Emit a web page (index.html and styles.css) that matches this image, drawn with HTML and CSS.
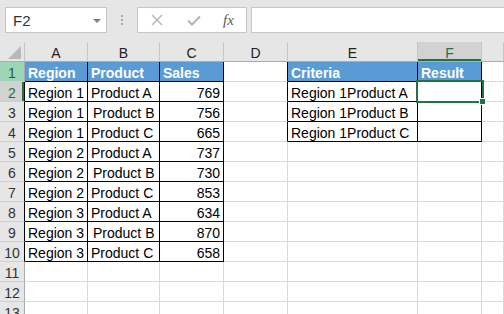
FILE: index.html
```html
<!DOCTYPE html>
<html lang="en">

<head>
    <meta charset="UTF-8">
    <meta name="viewport" content="width=device-width, initial-scale=1.0">
    <title>Sheet1</title>
    <link rel="stylesheet" href="styles.css">
</head>

<body>
    <div class="bar">
        <div class="namebox">
            <span>F2</span>
            <span class="caret"></span>
        </div>
        <div class="grip"><i></i><i></i><i></i></div>
        <div class="fxbox">
            <svg class="cancel" width="12" height="12" viewBox="0 0 12 12">
                <path d="M1 1L11 11M11 1L1 11" stroke="#b4b4b4" stroke-width="1.4" fill="none" />
            </svg>
            <svg class="enter" width="14" height="11" viewBox="0 0 14 11">
                <path d="M1 5.5L5 9.5L13 1.5" stroke="#b4b4b4" stroke-width="2" fill="none" />
            </svg>
            <span class="fx">fx</span>
        </div>
        <div class="formula"></div>
    </div>

    <div class="sheet">
        <div class="row">
            <div class="c corner">
                <svg width="13" height="13" viewBox="0 0 13 13"><path d="M13 0V13H0Z" fill="#b9b9b9" /></svg>
            </div>
            <div class="c ch">A</div>
            <div class="c ch">B</div>
            <div class="c ch">C</div>
            <div class="c ch">D</div>
            <div class="c ch">E</div>
            <div class="c ch sel">F</div>
            <div class="c ch"></div>
        </div>

        <div class="row">
            <div class="c rh act">1</div>
            <div class="c hd">Region</div>
            <div class="c hd">Product</div>
            <div class="c hd">Sales</div>
            <div class="c edge"></div>
            <div class="c hd">Criteria</div>
            <div class="c hd">Result</div>
            <div class="c"></div>
        </div>

        <div class="row">
            <div class="c rh cur">2</div>
            <div class="c t">Region 1</div>
            <div class="c t">Product A</div>
            <div class="c t num">769</div>
            <div class="c edge"></div>
            <div class="c t">Region 1Product A</div>
            <div class="c t active"><span class="pick"><b class="handle"></b></span></div>
            <div class="c"></div>
        </div>

        <div class="row">
            <div class="c rh edge">3</div>
            <div class="c t">Region 1</div>
            <div class="c t pad">Product B</div>
            <div class="c t num">756</div>
            <div class="c edge"></div>
            <div class="c t">Region 1Product B</div>
            <div class="c t"></div>
            <div class="c"></div>
        </div>

        <div class="row">
            <div class="c rh edge">4</div>
            <div class="c t">Region 1</div>
            <div class="c t">Product C</div>
            <div class="c t num">665</div>
            <div class="c edge"></div>
            <div class="c t">Region 1Product C</div>
            <div class="c t"></div>
            <div class="c"></div>
        </div>

        <div class="row">
            <div class="c rh edge">5</div>
            <div class="c t">Region 2</div>
            <div class="c t">Product A</div>
            <div class="c t num">737</div>
            <div class="c"></div>
            <div class="c"></div>
            <div class="c"></div>
            <div class="c"></div>
        </div>

        <div class="row">
            <div class="c rh edge">6</div>
            <div class="c t">Region 2</div>
            <div class="c t pad">Product B</div>
            <div class="c t num">730</div>
            <div class="c"></div>
            <div class="c"></div>
            <div class="c"></div>
            <div class="c"></div>
        </div>

        <div class="row">
            <div class="c rh edge">7</div>
            <div class="c t">Region 2</div>
            <div class="c t">Product C</div>
            <div class="c t num">853</div>
            <div class="c"></div>
            <div class="c"></div>
            <div class="c"></div>
            <div class="c"></div>
        </div>

        <div class="row">
            <div class="c rh edge">8</div>
            <div class="c t">Region 3</div>
            <div class="c t">Product A</div>
            <div class="c t num">634</div>
            <div class="c"></div>
            <div class="c"></div>
            <div class="c"></div>
            <div class="c"></div>
        </div>

        <div class="row">
            <div class="c rh edge">9</div>
            <div class="c t">Region 3</div>
            <div class="c t pad">Product B</div>
            <div class="c t num">870</div>
            <div class="c"></div>
            <div class="c"></div>
            <div class="c"></div>
            <div class="c"></div>
        </div>

        <div class="row">
            <div class="c rh edge">10</div>
            <div class="c t">Region 3</div>
            <div class="c t">Product C</div>
            <div class="c t num">658</div>
            <div class="c"></div>
            <div class="c"></div>
            <div class="c"></div>
            <div class="c"></div>
        </div>

        <div class="row">
            <div class="c rh">11</div>
            <div class="c"></div>
            <div class="c"></div>
            <div class="c"></div>
            <div class="c"></div>
            <div class="c"></div>
            <div class="c"></div>
            <div class="c"></div>
        </div>

        <div class="row">
            <div class="c rh">12</div>
            <div class="c"></div>
            <div class="c"></div>
            <div class="c"></div>
            <div class="c"></div>
            <div class="c"></div>
            <div class="c"></div>
            <div class="c"></div>
        </div>

        <div class="row">
            <div class="c rh">13</div>
            <div class="c"></div>
            <div class="c"></div>
            <div class="c"></div>
            <div class="c"></div>
            <div class="c"></div>
            <div class="c"></div>
            <div class="c"></div>
        </div>
    </div>
</body>

</html>
```

FILE: styles.css
```css
body {
    font-family: "Liberation Sans", Arial, sans-serif;
    font-size: 14px;
    margin: 0;
    padding: 0;
    background-color: #fff;
    color: #000;
    overflow: hidden;
}

/* formula bar */
.bar {
    height: 42px;
    box-sizing: border-box;
    padding: 7px 0 0 5px;
    background-color: #e6e6e6;
    display: flex;
    align-items: flex-start;
}

.namebox {
    width: 102px;
    height: 26px;
    box-sizing: border-box;
    border: 1px solid #c6c6c6;
    background-color: #fff;
    display: flex;
    align-items: center;
    justify-content: space-between;
    padding: 0 5px 0 7px;
    color: #333;
    font-size: 15px;
}

.caret {
    width: 0;
    height: 0;
    border-left: 4px solid transparent;
    border-right: 4px solid transparent;
    border-top: 4px solid #808080;
    margin-top: 1px;
}

.grip {
    margin: 8px 0 0 14px;
    display: flex;
    flex-direction: column;
    gap: 2px;
}

.grip i {
    width: 2px;
    height: 2px;
    background-color: #a6a6a6;
}

.fxbox {
    margin-left: 14px;
    width: 110px;
    height: 26px;
    box-sizing: border-box;
    border: 1px solid #c6c6c6;
    background-color: #fff;
    display: flex;
    align-items: center;
}

.cancel {
    margin-left: 13px;
}

.enter {
    margin-left: 24px;
}

.fx {
    margin-left: 22px;
    font-family: "Liberation Serif", "Times New Roman", serif;
    font-style: italic;
    font-size: 15px;
    color: #5a5a5a;
}

.formula {
    margin-left: 4px;
    flex: 1;
    height: 26px;
    box-sizing: border-box;
    border: 1px solid #c6c6c6;
    border-right: none;
    background-color: #fff;
}

/* grid */
.row {
    display: grid;
    grid-template-columns: 25px 63px 72px 64px 64px 130px 64px 1fr;
    height: 20px;
}

.c {
    box-sizing: border-box;
    border-right: 1px solid #d9d9d9;
    border-bottom: 1px solid #d9d9d9;
    padding: 2px 3px 0;
    line-height: 18px;
    white-space: nowrap;
    overflow: hidden;
}

.corner {
    background-color: #e6e6e6;
    border-right-color: #c6c6c6;
    border-bottom-color: #ababab;
    padding: 4px 3px 0 0;
    display: flex;
    justify-content: flex-end;
    align-items: flex-start;
}

.ch {
    background-color: #e6e6e6;
    border-right-color: #c6c6c6;
    border-bottom-color: #ababab;
    text-align: center;
    color: #222;
}

.ch.sel {
    background-color: #d2d2d2;
    color: #217346;
    box-shadow: inset 0 -2px 0 #217346;
}

.rh {
    background-color: #e6e6e6;
    border-right-color: #ababab;
    border-bottom-color: #cfcfcf;
    text-align: center;
    padding: 2px 0 0;
    color: #333;
}

.rh.act {
    background-color: #9fd5b7;
    color: #1e5c39;
}

.rh.cur {
    background-color: #d2d2d2;
    color: #217346;
    border-right-color: #000;
    box-shadow: inset -2px 0 0 #217346;
}

.edge {
    border-right-color: #000;
}

.hd {
    background-color: #5b9bd5;
    color: #fff;
    font-weight: bold;
    border-right-color: #000;
    border-bottom-color: #000;
}

.t {
    border-right-color: #000;
    border-bottom-color: #000;
}

.pad {
    padding-left: 5px;
}

.num {
    text-align: right;
}

.active {
    position: relative;
    overflow: visible;
}

.pick {
    position: absolute;
    left: -2px;
    top: -2px;
    right: -3px;
    bottom: -2px;
    border: 2px solid #217346;
}

.handle {
    position: absolute;
    right: -4px;
    bottom: -4px;
    width: 5px;
    height: 5px;
    background-color: #217346;
    border: 1px solid #fff;
}
```
